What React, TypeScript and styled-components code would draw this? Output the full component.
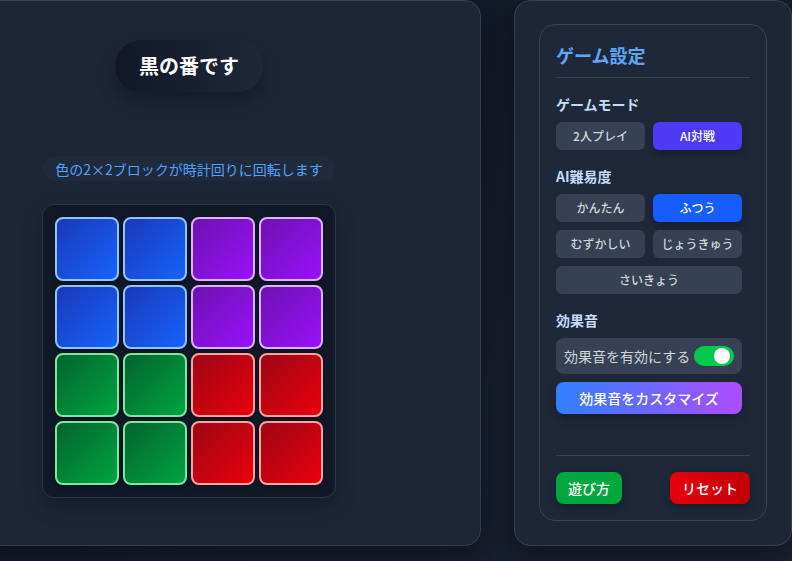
import React from "react";
import styled, { createGlobalStyle } from "styled-components";

const GlobalStyle = createGlobalStyle`
  html, body {
    margin: 0;
    padding: 0;
    overflow: hidden;
  }
  body {
    background: linear-gradient(135deg, #0f1523 0%, #151c2a 50%, #1a2131 100%);
    font-family: "Noto Sans CJK JP", "Noto Sans", sans-serif;
    color: #d1d5dc;
  }
  * { box-sizing: border-box; }
`;

const Page = styled.div`
  width: 792px;
  height: 561px;
  display: flex;
  justify-content: flex-end;
  align-items: flex-start;
  gap: 33px;
  overflow: hidden;
`;

const Panel = styled.section`
  flex-shrink: 0;
  height: 546px;
  background: #1d2637;
  border: 1px solid #334053;
  border-radius: 16px;
  box-shadow: 0 12px 30px rgba(0, 0, 0, 0.35);
`;

const GamePanel = styled(Panel)`
  width: 584px;
  display: flex;
  flex-direction: column;
  align-items: center;
  padding-top: 39px;
`;

const SidePanel = styled(Panel)`
  width: 278px;
  padding: 23px 24px 24px;
  display: flex;
`;

const TurnPill = styled.div`
  height: 52px;
  padding: 0 24px;
  display: flex;
  align-items: center;
  border-radius: 999px;
  background: linear-gradient(to right, #111726, #1e2838);
  box-shadow: 0 10px 18px rgba(0, 0, 0, 0.28);
  color: #ffffff;
  font-size: 20px;
  font-weight: 700;
  line-height: 28px;
`;

const Hint = styled.div`
  margin-top: 64px;
  height: 25px;
  padding: 0 12px;
  display: flex;
  align-items: center;
  border-radius: 999px;
  background: #1f2a3c;
  color: #51a2ff;
  font-size: 14px;
  line-height: 20px;
`;

const Board = styled.div`
  margin-top: 23px;
  padding: 12px;
  display: grid;
  grid-template-columns: repeat(4, 64px);
  grid-auto-rows: 64px;
  gap: 4px;
  background: #111827;
  border: 1px solid #2c3647;
  border-radius: 12px;
  box-shadow: 0 8px 20px rgba(0, 0, 0, 0.25);
`;

type Tone = "blue" | "purple" | "green" | "red";

const tones: Record<Tone, { from: string; to: string; edge: string }> = {
  blue: { from: "#1a39b8", to: "#1662fb", edge: "#8ec5ff" },
  purple: { from: "#6c12b0", to: "#9a10fa", edge: "#dab2ff" },
  green: { from: "#03632f", to: "#00a440", edge: "#7be8a0" },
  red: { from: "#9c0614", to: "#ea000c", edge: "#ffa2a2" },
};

const Cell = styled.div<{ $tone: Tone }>`
  border-radius: 8px;
  border: 2px solid ${(p) => tones[p.$tone].edge};
  background: linear-gradient(
    135deg,
    ${(p) => tones[p.$tone].from},
    ${(p) => tones[p.$tone].to}
  );
  box-shadow: 0 2px 4px rgba(0, 0, 0, 0.25);
`;

const Card = styled.div`
  flex: 1;
  display: flex;
  flex-direction: column;
  padding: 16px;
  background: #1e2839;
  border: 1px solid #364256;
  border-radius: 16px;
`;

const CardTitle = styled.h2`
  margin: 0;
  padding-bottom: 8px;
  border-bottom: 1px solid #364153;
  color: #5ea6f8;
  font-size: 18px;
  line-height: 28px;
  font-weight: 700;
`;

const SettingsBody = styled.div`
  flex: 1;
  margin-top: 16px;
  padding-right: 8px;
  display: flex;
  flex-direction: column;
  gap: 16px;
`;

const Section = styled.div`
  display: flex;
  flex-direction: column;
  gap: 8px;
`;

const Label = styled.h3`
  margin: 0;
  color: #c3dcf9;
  font-size: 14px;
  line-height: 20px;
  font-weight: 700;
`;

const Options = styled.div`
  display: grid;
  grid-template-columns: 1fr 1fr;
  gap: 8px;
`;

type Accent = "none" | "indigo" | "blue";

const accentBg: Record<Accent, string> = {
  none: "#364153",
  indigo: "#4f39f6",
  blue: "#155dfc",
};

const OptionButton = styled.button<{ $accent: Accent; $wide?: boolean }>`
  grid-column: ${(p) => (p.$wide ? "1 / -1" : "auto")};
  height: 28px;
  border: none;
  border-radius: 6px;
  background: ${(p) => accentBg[p.$accent]};
  color: ${(p) => (p.$accent === "none" ? "#d1d5dc" : "#ffffff")};
  font-family: inherit;
  font-size: 12px;
  line-height: 16px;
  font-weight: 500;
  cursor: pointer;
  box-shadow: ${(p) =>
    p.$accent === "none" ? "none" : "0 4px 8px rgba(0, 0, 0, 0.25)"};
`;

const ToggleRow = styled.label`
  height: 36px;
  padding: 0 8px;
  display: flex;
  align-items: center;
  justify-content: space-between;
  border-radius: 8px;
  background: #364153;
  color: #d1d5dc;
  font-size: 14px;
  line-height: 20px;
`;

const Switch = styled.span<{ $on: boolean }>`
  width: 40px;
  height: 20px;
  padding: 0 4px;
  display: flex;
  align-items: center;
  justify-content: ${(p) => (p.$on ? "flex-end" : "flex-start")};
  border-radius: 999px;
  background: ${(p) => (p.$on ? "#00c950" : "#4a5565")};
`;

const Knob = styled.span`
  width: 16px;
  height: 16px;
  border-radius: 50%;
  background: #ffffff;
`;

const GradientButton = styled.button`
  height: 32px;
  border: none;
  border-radius: 8px;
  background: linear-gradient(to right, #3080ff, #ad4cff);
  color: #ffffff;
  font-family: inherit;
  font-size: 14px;
  line-height: 20px;
  font-weight: 500;
  cursor: pointer;
  box-shadow: 0 4px 10px rgba(0, 0, 0, 0.25);
`;

const Footer = styled.div`
  padding-top: 16px;
  border-top: 1px solid #364153;
  display: flex;
  justify-content: space-between;
`;

const FooterButton = styled.button<{ $kind: "green" | "red" }>`
  height: 32px;
  padding: 0 12px;
  border: none;
  border-radius: 8px;
  background: ${(p) =>
    p.$kind === "green"
      ? "#00a63e"
      : "linear-gradient(to right, #e7000b, #c10007)"};
  color: #ffffff;
  font-family: inherit;
  font-size: 14px;
  line-height: 20px;
  font-weight: 500;
  cursor: pointer;
  box-shadow: 0 4px 8px rgba(0, 0, 0, 0.25);
`;

const boardLayout: Tone[] = [
  "blue", "blue", "purple", "purple",
  "blue", "blue", "purple", "purple",
  "green", "green", "red", "red",
  "green", "green", "red", "red",
];

export default function App() {
  return (
    <>
      <GlobalStyle />
      <Page>
        <GamePanel>
          <TurnPill>黒の番です</TurnPill>
          <Hint>色の2×2ブロックが時計回りに回転します</Hint>
          <Board>
            {boardLayout.map((tone, i) => (
              <Cell key={i} $tone={tone} />
            ))}
          </Board>
        </GamePanel>
        <SidePanel>
          <Card>
            <CardTitle>ゲーム設定</CardTitle>
            <SettingsBody>
              <Section>
                <Label>ゲームモード</Label>
                <Options>
                  <OptionButton $accent="none">2人プレイ</OptionButton>
                  <OptionButton $accent="indigo">AI対戦</OptionButton>
                </Options>
              </Section>
              <Section>
                <Label>AI難易度</Label>
                <Options>
                  <OptionButton $accent="none">かんたん</OptionButton>
                  <OptionButton $accent="blue">ふつう</OptionButton>
                  <OptionButton $accent="none">むずかしい</OptionButton>
                  <OptionButton $accent="none">じょうきゅう</OptionButton>
                  <OptionButton $accent="none" $wide>
                    さいきょう
                  </OptionButton>
                </Options>
              </Section>
              <Section>
                <Label>効果音</Label>
                <ToggleRow>
                  効果音を有効にする
                  <Switch $on>
                    <Knob />
                  </Switch>
                </ToggleRow>
                <GradientButton>効果音をカスタマイズ</GradientButton>
              </Section>
            </SettingsBody>
            <Footer>
              <FooterButton $kind="green">遊び方</FooterButton>
              <FooterButton $kind="red">リセット</FooterButton>
            </Footer>
          </Card>
        </SidePanel>
      </Page>
    </>
  );
}
